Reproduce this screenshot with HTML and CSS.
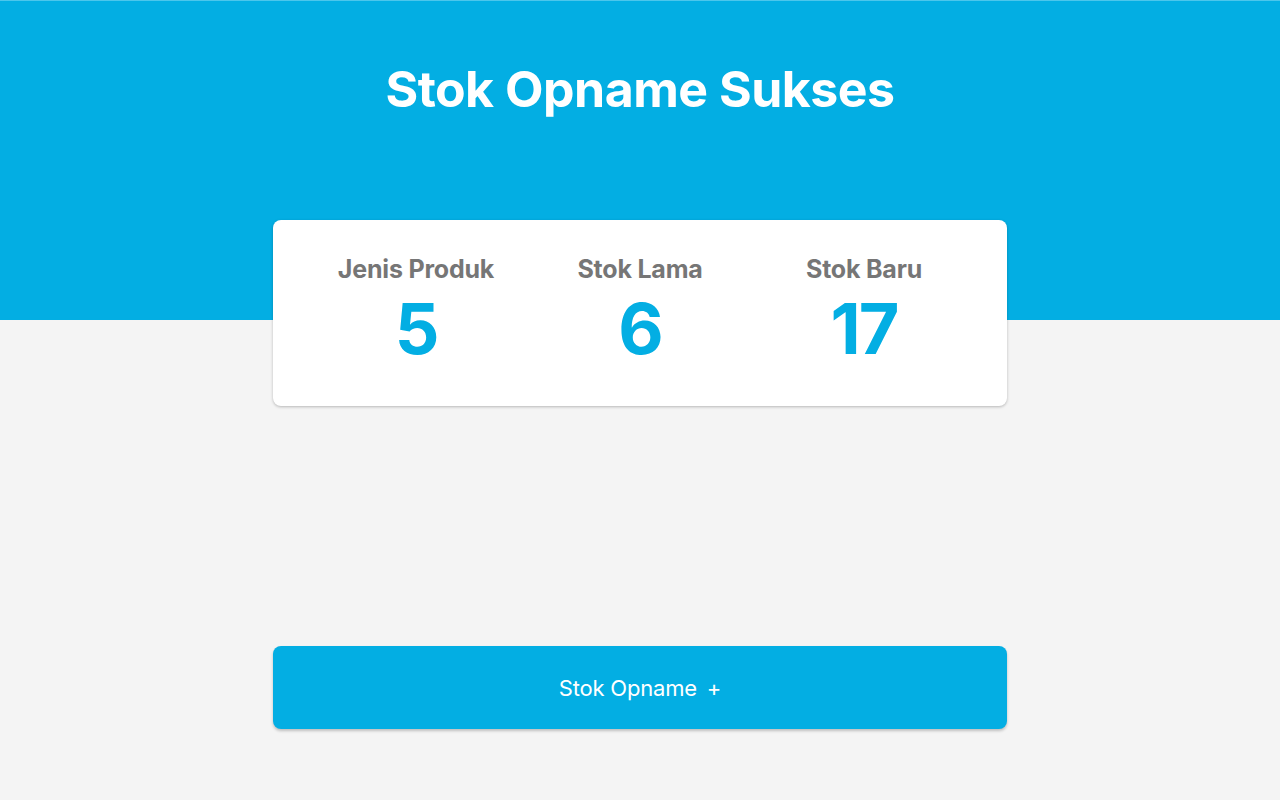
FILE: index.html
```html
<!DOCTYPE html>
<html lang="id">
<head>
<meta charset="utf-8">
<title>Stok Opname Sukses</title>
<link rel="stylesheet" href="styles.css">
</head>
<body>
<div class="page">
  <header class="hero">
    <h1 class="title">Stok Opname Sukses</h1>
  </header>
  <main class="content">
    <section class="card">
      <div class="stat">
        <div class="stat-label">Jenis Produk</div>
        <div class="stat-value">5</div>
      </div>
      <div class="stat">
        <div class="stat-label">Stok Lama</div>
        <div class="stat-value">6</div>
      </div>
      <div class="stat">
        <div class="stat-label">Stok Baru</div>
        <div class="stat-value">17</div>
      </div>
    </section>
    <button class="action" type="button">Stok Opname <span class="plus">+</span></button>
  </main>
</div>
</body>
</html>
```

FILE: styles.css
```css
* { box-sizing: border-box; }
html, body {
  margin: 0;
  padding: 0;
  height: 100%;
}
body {
  background: #f4f4f4;
  font-family: "Inter", "Open Sans", "Liberation Sans", sans-serif;
}
.page {
  min-height: 800px;
  display: flex;
  flex-direction: column;
  align-items: center;
}
.hero {
  width: 100%;
  height: 320px;
  background: #03aee3;
  border-top: 1px solid #4cc6ec;
  display: flex;
  justify-content: center;
  padding-top: 53px;
}
.title {
  margin: 0;
  color: #ffffff;
  font-size: 50px;
  font-weight: 700;
  line-height: 70px;
  letter-spacing: -0.5px;
}
.content {
  width: 734px;
  margin-top: -100px;
  display: flex;
  flex-direction: column;
}
.card {
  height: 186px;
  background: #ffffff;
  border-radius: 8px;
  box-shadow: 0 1px 3px rgba(0,0,0,0.25);
  display: grid;
  grid-template-columns: repeat(3, 1fr);
  padding: 31px 31px 0;
}
.stat {
  display: flex;
  flex-direction: column;
  align-items: center;
}
.stat-label {
  color: #767676;
  font-size: 25px;
  font-weight: 700;
  line-height: 36px;
  letter-spacing: -0.2px;
}
.stat-value {
  color: #03aee3;
  font-size: 70px;
  font-weight: 700;
  line-height: 84px;
  letter-spacing: -2px;
}
.action {
  margin-top: 240px;
  height: 83px;
  width: 100%;
  border: none;
  border-radius: 8px;
  background: #03aee3;
  color: #ffffff;
  font-family: inherit;
  font-size: 22px;
  font-weight: 400;
  letter-spacing: -0.2px;
  box-shadow: 0 2px 3px rgba(0,0,0,0.22);
  cursor: pointer;
}
.plus {
  margin-left: 4px;
}
```
